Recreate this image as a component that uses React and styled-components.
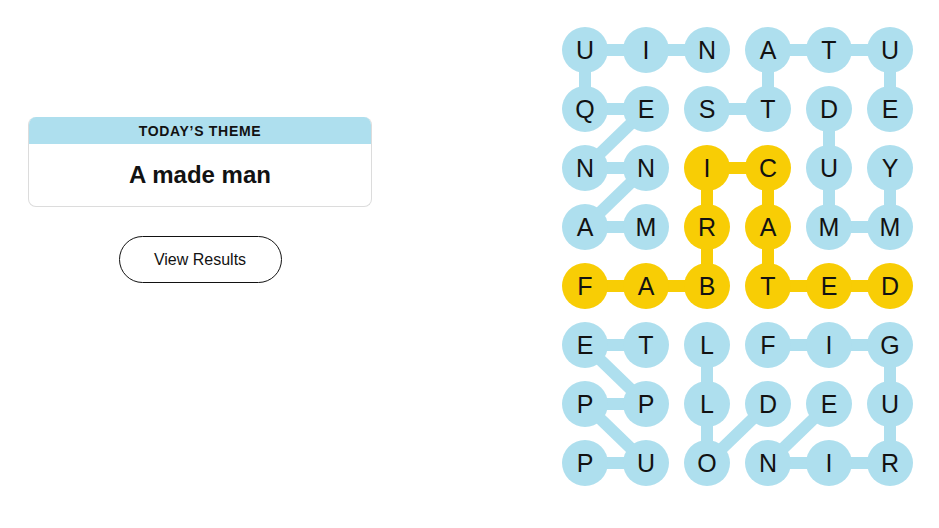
import React from 'react'
import styled, { createGlobalStyle } from 'styled-components'

const BLUE = '#aedfee'
const YELLOW = '#f8cd05'

const rows = [
  'UINATU',
  'QESTDE',
  'NNICUY',
  'AMRAMM',
  'FABTED',
  'ETLFIG',
  'PPLDEU',
  'PUONIR',
]

// cells of the spangram
const spangram = ['2,2', '2,3', '3,2', '3,3', '4,0', '4,1', '4,2', '4,3', '4,4', '4,5']

// links between cells: [r1, c1, r2, c2, yellow?]
const links = [
  [0, 0, 0, 1], [0, 1, 0, 2], [0, 0, 1, 0], [1, 0, 1, 1], [1, 1, 2, 0],
  [2, 0, 2, 1], [2, 1, 3, 0], [3, 0, 3, 1],
  [0, 3, 0, 4], [0, 4, 0, 5], [0, 3, 1, 3], [1, 2, 1, 3], [0, 5, 1, 5],
  [1, 4, 2, 4], [2, 4, 3, 4], [3, 4, 3, 5], [2, 5, 3, 5],
  [2, 2, 2, 3, 1], [2, 2, 3, 2, 1], [3, 2, 4, 2, 1], [2, 3, 3, 3, 1], [3, 3, 4, 3, 1],
  [4, 0, 4, 1, 1], [4, 1, 4, 2, 1], [4, 3, 4, 4, 1], [4, 4, 4, 5, 1],
  [5, 0, 5, 1], [5, 0, 6, 1], [6, 0, 6, 1], [6, 0, 7, 1], [7, 0, 7, 1],
  [5, 2, 6, 2], [6, 2, 7, 2], [7, 2, 6, 3],
  [5, 3, 5, 4], [5, 4, 5, 5], [5, 5, 6, 5], [6, 5, 7, 5], [7, 5, 7, 4], [7, 4, 7, 3], [7, 3, 6, 4],
]

const cx = (c) => 23 + 61 * c
const cy = (r) => 23 + 59 * r

const GlobalStyle = createGlobalStyle`
  body {
    margin: 0;
    background: #fff;
    color: #121212;
    font-family: "Liberation Sans", Arial, sans-serif;
  }
`

const Page = styled.main`
  display: flex;
  align-items: flex-start;
  padding: 27px 0 0 28px;
`

const LeftPanel = styled.section`
  width: 344px;
  margin-top: 90px;
  display: flex;
  flex-direction: column;
  align-items: center;
  gap: 29px;
`

const ThemeCard = styled.div`
  width: 100%;
  box-sizing: border-box;
  border: 1px solid #dcdcdc;
  border-top: none;
  border-radius: 8px;
  overflow: hidden;
`

const ThemeHeader = styled.div`
  height: 27px;
  background: ${BLUE};
  display: flex;
  align-items: center;
  justify-content: center;
  font-size: 14px;
  font-weight: 700;
  letter-spacing: 0.7px;
  text-transform: uppercase;
  color: #121212;
`

const ThemeBody = styled.div`
  height: 62px;
  display: flex;
  align-items: center;
  justify-content: center;
  font-size: 24px;
  font-weight: 700;
  color: #121212;
`

const ResultsButton = styled.button`
  width: 163px;
  height: 47px;
  border: 1px solid #121212;
  border-radius: 24px;
  background: #fff;
  font-family: inherit;
  font-size: 16px;
  color: #121212;
  cursor: pointer;
`

const Board = styled.div`
  position: relative;
  margin-left: 190px;
  display: grid;
  grid-template-columns: repeat(6, 46px);
  grid-auto-rows: 46px;
  column-gap: 15px;
  row-gap: 13px;
`

const Links = styled.svg`
  position: absolute;
  left: 0;
  top: 0;
  z-index: 0;
`

const Cell = styled.div`
  position: relative;
  z-index: 1;
  width: 46px;
  height: 46px;
  border-radius: 50%;
  background: ${(p) => (p.$found ? YELLOW : BLUE)};
  display: flex;
  align-items: center;
  justify-content: center;
  font-size: 25px;
  line-height: 1;
  color: #121212;
`

export default function App() {
  return (
    <>
      <GlobalStyle />
      <Page>
        <LeftPanel>
          <ThemeCard>
            <ThemeHeader>Today’s Theme</ThemeHeader>
            <ThemeBody>A made man</ThemeBody>
          </ThemeCard>
          <ResultsButton>View Results</ResultsButton>
        </LeftPanel>
        <Board>
          <Links width="351" height="459">
            {links.map(([r1, c1, r2, c2, y], i) => (
              <line
                key={i}
                x1={cx(c1)}
                y1={cy(r1)}
                x2={cx(c2)}
                y2={cy(r2)}
                stroke={y ? YELLOW : BLUE}
                strokeWidth="12"
              />
            ))}
          </Links>
          {rows.map((row, r) =>
            row.split('').map((ch, c) => (
              <Cell key={`${r}-${c}`} $found={spangram.includes(`${r},${c}`)}>
                {ch}
              </Cell>
            ))
          )}
        </Board>
      </Page>
    </>
  )
}
